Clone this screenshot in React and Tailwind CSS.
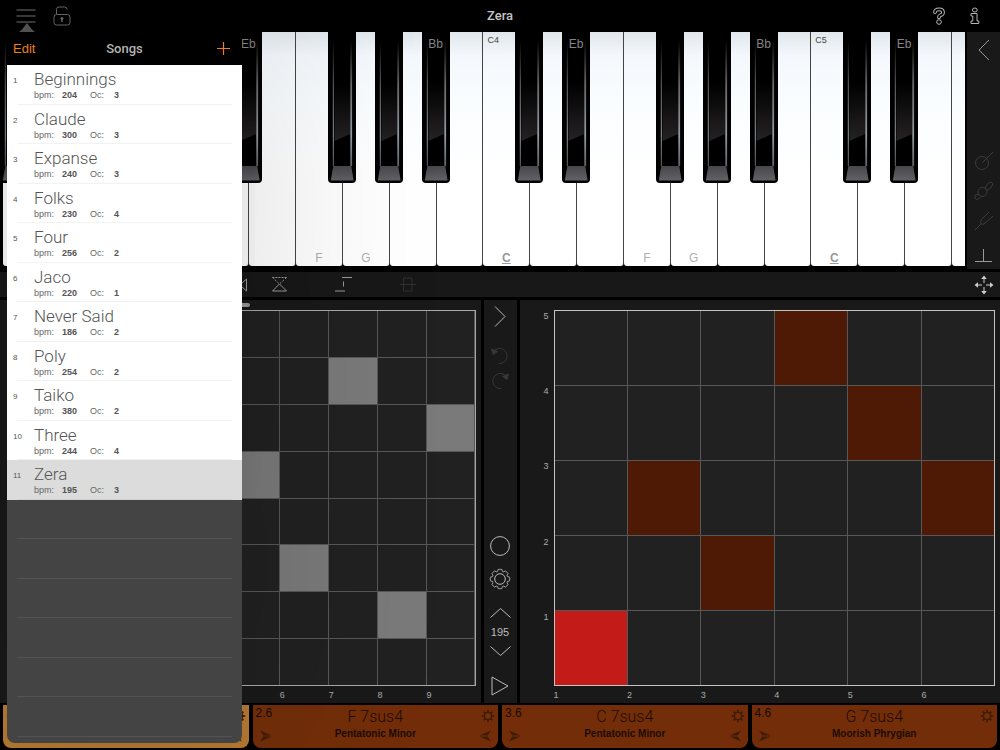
import React, { useState } from "react";
import clsx from "clsx";

const SONGS = [
  { name: "Beginnings", bpm: 204, oc: 3 },
  { name: "Claude", bpm: 300, oc: 3 },
  { name: "Expanse", bpm: 240, oc: 3 },
  { name: "Folks", bpm: 230, oc: 4 },
  { name: "Four", bpm: 256, oc: 2 },
  { name: "Jaco", bpm: 220, oc: 1 },
  { name: "Never Said", bpm: 186, oc: 2 },
  { name: "Poly", bpm: 254, oc: 2 },
  { name: "Taiko", bpm: 380, oc: 2 },
  { name: "Three", bpm: 244, oc: 4 },
  { name: "Zera", bpm: 195, oc: 3 },
];

const EMPTY_ROWS = 6;

const PADS = [
  { id: "1.6", chord: "Bb 7sus4", scale: "Pentatonic Minor", active: true },
  { id: "2.6", chord: "F 7sus4", scale: "Pentatonic Minor" },
  { id: "3.6", chord: "C 7sus4", scale: "Pentatonic Minor" },
  { id: "4.6", chord: "G 7sus4", scale: "Moorish Phrygian", last: true },
];

// "column-row", rows are counted from the top
const NOTE_CELLS = ["7-2", "9-3", "5-4", "6-6", "8-7"];
const SCALE_CELLS = ["4-1", "5-2", "2-3", "6-3", "3-4"];

const NOTES = ["C", "D", "E", "F", "G", "A", "B"];
const HAS_SHARP = ["C", "D", "F", "G", "A"];
const SCALE_NOTES = ["C", "F", "G"];

// 8 lobes around the gear wheel
const gearPath = () => {
  const points = [];
  for (let i = 0; i < 160; i++) {
    const a = (i / 160) * Math.PI * 2;
    const r = 8.8 + 0.9 * Math.tanh(1.5 + 4 * Math.cos(8 * a));
    points.push(`${(11 + r * Math.sin(a)).toFixed(2)} ${(11 - r * Math.cos(a)).toFixed(2)}`);
  }
  return `M${points.join("L")}Z`;
};

const GEAR = gearPath();

// --- Icons ---
const Icon = ({ w, h, className, children }) => (
  <svg
    width={w}
    height={h}
    viewBox={`0 0 ${w} ${h}`}
    fill="none"
    stroke="currentColor"
    className={clsx("block shrink-0", className)}
    aria-hidden="true"
  >
    {children}
  </svg>
);

const MenuIcon = () => (
  <Icon w={20} h={14}>
    <path d="M0.500 1h19M0.500 7h19M0.500 13h19" strokeWidth="1.200" />
  </Icon>
);

const LockIcon = () => (
  <Icon w={18} h={20}>
    <rect x="1" y="8.500" width="16" height="10.500" rx="2.500" />
    <path d="M3.500 8.500V3.500Q3.500 1 6 1h5.500Q14 1 14.300 3.500" />
    <circle cx="9" cy="12.500" r="1" fill="currentColor" />
    <path d="M9 12v4" strokeWidth="1.400" />
  </Icon>
);

const HelpIcon = () => (
  <Icon w={14} h={18}>
    <g strokeLinecap="round" strokeLinejoin="round">
      <path d="M3 5.200Q3.200 2.300 7 2.300 11 2.300 11 5.400 11 7.400 8.500 8.200 7 8.800 7 10.200" strokeWidth="3.800" />
      <path d="M3 5.200Q3.200 2.300 7 2.300 11 2.300 11 5.400 11 7.400 8.500 8.200 7 8.800 7 10.200" stroke="#000" strokeWidth="1.800" />
    </g>
    <circle cx="7" cy="15" r="2.300" fill="#000" />
  </Icon>
);

const InfoIcon = () => (
  <Icon w={10} h={18}>
    <path d="M1 6.500h6v7.500h1.800v2.500H1V14h1.800V9H1z" strokeLinejoin="round" />
    <ellipse cx="4.800" cy="3" rx="2.400" ry="2" />
  </Icon>
);

const SendIcon = ({ flip }) => (
  <svg width="11" height="12" viewBox="0 0 11 12" className={clsx("block text-[#3f1c08]", flip && "-scale-x-100")} aria-hidden="true">
    <path d="M0 0.500 11 5.200H3.200zM0 11.500 11 6.800H3.200z" fill="currentColor" />
    <path d="M3 6h8" stroke="currentColor" strokeWidth="0.600" />
  </svg>
);

const PadGearIcon = () => (
  <Icon w={14} h={14} className="text-[#3f1c08]">
    <circle cx="7" cy="7" r="3.600" strokeWidth="1.400" />
    {[0, 45, 90, 135, 180, 225, 270, 315].map((deg) => (
      <path key={deg} d="M7 0.800V3.400" strokeWidth="1.800" transform={`rotate(${deg} 7 7)`} />
    ))}
  </Icon>
);

// --- Piano ---
const PianoDefs = () => (
  <svg width="0" height="0" className="absolute" aria-hidden="true">
    <defs>
      <linearGradient id="edge" x1="0" y1="0" x2="0" y2="1">
        <stop offset="0" stopColor="#000" />
        <stop offset="0.350" stopColor="#6a6668" />
        <stop offset="0.750" stopColor="#939ca3" />
        <stop offset="1" stopColor="#606468" />
      </linearGradient>
      <linearGradient id="face" x1="0" y1="0" x2="0" y2="1">
        <stop offset="0.450" stopColor="#000" />
        <stop offset="1" stopColor="#252223" />
      </linearGradient>
      <linearGradient id="lip" x1="0" y1="0" x2="0" y2="1">
        <stop offset="0" stopColor="#47464a" />
        <stop offset="1" stopColor="#636165" />
      </linearGradient>
    </defs>
  </svg>
);

const BlackKey = ({ label }) => (
  <button
    type="button"
    aria-label={label || "Black key"}
    className="absolute top-0 -right-[13px] z-10 h-[151px] w-7 overflow-hidden rounded-b-sm bg-black"
  >
    <svg viewBox="0 0 28 151" className="block h-full w-full" aria-hidden="true">
      <rect x="4.800" y="8" width="1" height="126" fill="url(#edge)" />
      <rect x="22.300" y="8" width="1.800" height="126" fill="url(#edge)" />
      <path d="M6.500 2H22V102L6.500 109z" fill="url(#face)" />
      <path d="M5.300 134H23.300L25.600 148.500H2.800z" fill="url(#lip)" />
    </svg>
    {label && (
      <span className="absolute inset-x-0 top-1 text-center text-xs leading-4 text-[#858585]">{label}</span>
    )}
  </button>
);

const PianoKey = ({ index, className }) => {
  const note = NOTES[(index + 3) % 7];
  const octave = 2 + Math.floor((index + 3) / 7);
  // the lowest keys stay unlabelled
  const labelled = index > 4;
  const sharp = labelled ? { D: "Eb", A: "Bb" }[note] : null;

  return (
    <div className={clsx("relative", className)}>
      <button
        type="button"
        aria-label={note + octave}
        className="relative block h-full w-full rounded-b-[3px] border-r border-[#444] bg-[linear-gradient(#e0e6eb,#f4f8fc_10%,#fafdff_30%,#fff_60%)]"
      >
        {labelled && note === "C" && (
          <span className="absolute top-0.5 left-1 text-[9px] leading-3 text-[#444]">C{octave}</span>
        )}
        {labelled && SCALE_NOTES.includes(note) && (
          <span
            className={clsx(
              "absolute inset-x-0 bottom-0 text-center text-xs leading-4",
              note === "C" ? "font-bold text-[#999] underline" : "text-[#b0b0b0]"
            )}
          >
            {note}
          </span>
        )}
      </button>
      {HAS_SHARP.includes(note) && <BlackKey label={sharp} />}
    </div>
  );
};

const Piano = () => (
  <div className="flex h-full min-w-0 flex-1 overflow-hidden pl-[3px] pr-[2px]">
    <PianoKey index={0} className="w-3 shrink-0" />
    {Array.from({ length: 20 }, (_, i) => (
      <PianoKey key={i} index={i + 1} className="flex-1" />
    ))}
    <div className="w-[13px] shrink-0 rounded-bl-[3px] bg-[linear-gradient(#e0e6eb,#f4f8fc_10%,#fafdff_30%,#fff_60%)]" />
  </div>
);

// --- Grids ---
const Grid = ({ cols, rows, isOn, onToggle, onColor, className, colsClass, rowsClass, labelClass }) => (
  <div className="flex h-full">
    <div className={clsx("grid h-full pb-[17px] pr-[5px] text-right text-[9px] leading-3 text-[#aaa]", rowsClass, labelClass)}>
      {Array.from({ length: rows }, (_, i) => (
        <span key={i}>{rows - i}</span>
      ))}
    </div>
    <div className="flex min-w-0 flex-1 flex-col">
      <div className={clsx("grid flex-1 gap-px border bg-[#575757]", colsClass, rowsClass, className)}>
        {Array.from({ length: rows * cols }, (_, i) => {
          const id = `${(i % cols) + 1}-${Math.floor(i / cols) + 1}`;
          return (
            <button
              key={id}
              type="button"
              aria-label={`Cell ${id}`}
              aria-pressed={isOn(id)}
              onClick={() => onToggle(id)}
              className={isOn(id) ? onColor(id) : "bg-[#212121]"}
            />
          );
        })}
      </div>
      <div className={clsx("grid h-[17px] pt-[3px] text-[9px] leading-3 text-[#aaa]", colsClass)}>
        {Array.from({ length: cols }, (_, i) => (
          <span key={i}>{i + 1}</span>
        ))}
      </div>
    </div>
  </div>
);

// --- Song list ---
const SongsPopover = ({ selected, onSelect }) => (
  <section className="absolute top-8 bottom-[7px] left-[7px] z-30 flex w-[235px] flex-col overflow-hidden rounded-b-lg bg-[#444] shadow-[0_0_200px_rgba(0,0,0,0.2)]">
    <header className="grid h-[33px] shrink-0 grid-cols-3 items-center bg-black px-1.5 text-[13px] leading-4">
      <button type="button" className="text-left text-[#ef7d1c]">Edit</button>
      <h2 className="text-center font-['Roboto',sans-serif] font-medium text-[#b4b4b4]">Songs</h2>
      <button type="button" aria-label="Add song" className="mr-1.5 justify-self-end text-[#ef7d1c]">
        <Icon w={13} h={13}>
          <path d="M6.500 0v13M0 6.500h13" strokeWidth="1.200" />
        </Icon>
      </button>
    </header>
    <ul className="grid flex-1 auto-rows-fr pb-1.5">
      {SONGS.map((song, i) => (
        <li key={song.name} className="min-h-0">
          <button
            type="button"
            onClick={() => onSelect(song.name)}
            className={clsx(
              "relative flex h-full w-full pt-1 pl-1.5 text-left",
              selected === song.name ? "bg-[#dcdcdc]" : "bg-white"
            )}
          >
            <span className="w-[21px] pt-1.5 text-[8px] leading-3 text-[#555]">{i + 1}</span>
            <span className="block">
              <span className="block font-['Roboto',sans-serif] text-[17px] leading-5 font-light text-[#555]">{song.name}</span>
              <span className="flex text-[9px] leading-3 text-[#666]">
                <span className="w-7">bpm:</span>
                <b className="w-7 text-[#555]">{song.bpm}</b>
                <span className="w-6">Oc:</span>
                <b className="text-[#555]">{song.oc}</b>
              </span>
            </span>
            <span className="absolute right-2.5 bottom-0 left-2.5 h-px bg-black/5" />
          </button>
        </li>
      ))}
      {Array.from({ length: EMPTY_ROWS }, (_, i) => (
        <li key={i} className="mx-2.5 border-b border-[#535353]" />
      ))}
    </ul>
  </section>
);

const Pad = ({ pad }) => (
  <article
    className={clsx(
      "flex min-w-0 flex-1 justify-between rounded-b-lg px-[3px]",
      pad.active ? "bg-[#b67b32]" : "bg-[#732e09]"
    )}
  >
    <div className="flex w-10 flex-col justify-between pb-1.5">
      <span className="text-xs leading-4 text-[#170a02]">{pad.id}</span>
      <button type="button" aria-label="Send forward" className="ml-1 w-3">
        <SendIcon />
      </button>
    </div>
    <button type="button" className="flex flex-col items-center pt-px text-[#1c0b02]">
      <span className="font-['Roboto',sans-serif] text-base leading-[22px] font-light">{pad.chord}</span>
      <span className="text-[10px] leading-3 font-bold">{pad.scale}</span>
    </button>
    <div className="flex w-10 flex-col items-end justify-between pt-1 pb-1.5">
      <button type="button" aria-label="Pad settings">
        <PadGearIcon />
      </button>
      {!pad.last && (
        <button type="button" aria-label="Send back" className="mr-1">
          <SendIcon flip />
        </button>
      )}
    </div>
  </article>
);

function App() {
  const [song, setSong] = useState("Zera");
  const [noteCells, setNoteCells] = useState(NOTE_CELLS);
  const [scaleCells, setScaleCells] = useState([...SCALE_CELLS, "1-5"]);
  const tempo = SONGS.find((s) => s.name === song).bpm;

  const toggle = (setter) => (id) =>
    setter((cells) => (cells.includes(id) ? cells.filter((c) => c !== id) : [...cells, id]));

  return (
    <div className="relative flex h-screen flex-col overflow-hidden bg-black font-['Liberation_Sans',Arial,sans-serif] text-[#aaa]">
      <PianoDefs />

      {/* Top bar */}
      <header className="grid h-8 shrink-0 grid-cols-3 items-center px-4">
        <div className="flex items-center gap-[17px] text-[#6b6b6b]">
          <button type="button" aria-label="Menu" className="text-[#777]"><MenuIcon /></button>
          <button type="button" aria-label="Lock"><LockIcon /></button>
        </div>
        <h1 className="text-center font-['Roboto',sans-serif] text-[13px] leading-4 font-medium text-[#c4c4c4]">{song}</h1>
        <div className="flex items-center justify-end gap-6 pr-1 text-[#b5b5b5]">
          <button type="button" aria-label="Help"><HelpIcon /></button>
          <button type="button" aria-label="Info"><InfoIcon /></button>
        </div>
      </header>

      {/* Piano and side bar */}
      <div className="flex h-[237px] shrink-0">
        <div className="flex min-w-0 flex-1 pb-[3px]">
          <Piano />
        </div>
        <aside className="flex w-[33px] flex-col items-center bg-[#191919] pt-[7px] pb-[7px] text-[#3c3c3c]">
          <button type="button" aria-label="Collapse" className="mb-auto text-[#999]">
            <Icon w={12} h={22}><path d="M11 1 1 11 11 21" /></Icon>
          </button>
          <div className="flex flex-col gap-2.5">
            <button type="button" aria-label="Whole note">
              <Icon w={20} h={20}><circle cx="8" cy="12" r="6.500" /><path d="M8 12 19 1" /></Icon>
            </button>
            <button type="button" aria-label="Link">
              <Icon w={20} h={20}>
                <circle cx="8.500" cy="11" r="4.500" />
                <path d="M11 8Q12 3 15.500 1.500 19 0.500 18.500 4 17 8 12 9.500" />
                <path d="M5 14Q0 12 1 17 3 20.500 7 15.500" />
              </Icon>
            </button>
            <button type="button" aria-label="Tuning fork">
              <Icon w={20} h={20}><path d="M15 1 7 9Q6 12 7.500 13 9 14 11 12L19 5M7 13 1 19" /></Icon>
            </button>
          </div>
          <button type="button" aria-label="Dock" className="mt-[18px] text-[#999]">
            <Icon w={17} h={13}><path d="M8.500 0v12M0 12.500h17" /></Icon>
          </button>
        </aside>
      </div>

      {/* Tool bar */}
      <div className="mt-[3px] flex h-[25px] shrink-0 items-center bg-[#181818] pr-1.5 text-[#999]">
        <div className="flex flex-1 items-center">
          <button type="button" aria-label="Flip horizontally" className="ml-[232px] w-4">
            <Icon w={15} h={14}><path d="M14.500 1v12L8 7zM0.500 1v12L7 7z" /></Icon>
          </button>
          <button type="button" aria-label="Flip vertically" className="ml-6">
            <Icon w={15} h={15}>
              <path d="M0.500 14h14L7.500 7z" />
              <path d="M0.500 0.500h14" strokeDasharray="2 1" />
              <path d="M14.500 0.500 7.500 7 0.500 0.500" strokeDasharray="2 1.500" />
            </Icon>
          </button>
          <button type="button" aria-label="Align" className="ml-12">
            <Icon w={17} h={15}><path d="M7 0.500h10M0 14h10M8.500 4.500v5" /></Icon>
          </button>
          <button type="button" aria-label="Split" className="ml-12 text-[#303030]">
            <Icon w={16} h={15}><path d="M3.500 1h8.500v13H3.500zM0 7.500h16" /></Icon>
          </button>
        </div>
        <button type="button" aria-label="Move">
          <Icon w={20} h={20} className="text-[#ccc]">
            <path d="M10 3v5M10 12v5M3 10h5M12 10h5" />
            <path
              d="M10 0.500 7.200 4h5.600zM10 19.500 7.200 16h5.600zM0.500 10 4 7.200v5.600zM19.500 10 16 7.200v5.600z"
              fill="currentColor"
              stroke="none"
            />
          </Icon>
        </button>
      </div>

      {/* Grids */}
      <main className="mt-[3px] flex min-h-0 flex-1 gap-[3px]">
        <section className="relative flex-1 bg-[#191919] pt-2.5 pr-[5px]">
          <Grid
            cols={9}
            rows={8}
            colsClass="grid-cols-9"
            rowsClass="grid-rows-8"
            labelClass="w-[35px]"
            className="border-[#a8a8a8]"
            isOn={(id) => noteCells.includes(id)}
            onToggle={toggle(setNoteCells)}
            onColor={() => "bg-[#7a7a7a]"}
          />
          <span className="absolute top-[3px] left-[35px] h-1 w-[215px] rounded-full bg-[#999]" />
        </section>

        <nav className="flex w-[33px] shrink-0 flex-col items-center bg-[#191919] pt-1.5 pb-[7px] text-[#bbb]">
          <button type="button" aria-label="Expand">
            <Icon w={12} h={21}><path d="M1 0.500 11 10.500 1 20.500" /></Icon>
          </button>
          <button type="button" aria-label="Undo" className="mt-5 text-[#383838]">
            <Icon w={18} h={18}><path d="M3 4A7.500 7.500 0 1 1 8 16.500" /><path d="M0.500 2 2 7.500 6.500 4.500z" fill="currentColor" /></Icon>
          </button>
          <button type="button" aria-label="Redo" className="mt-[7px] text-[#383838]">
            <Icon w={18} h={18}><path d="M15 4A7.500 7.500 0 1 0 10 16.500" /><path d="M17.500 2 16 7.500 11.500 4.500z" fill="currentColor" /></Icon>
          </button>
          <button type="button" aria-label="Record" className="mt-auto">
            <Icon w={20} h={20}><circle cx="10" cy="10" r="9.400" /></Icon>
          </button>
          <button type="button" aria-label="Settings" className="mt-3">
            <Icon w={22} h={22}><path d={GEAR} strokeLinejoin="round" /><circle cx="11" cy="11" r="5.300" /></Icon>
          </button>
          <button type="button" aria-label="Tempo up" className="mt-[18px]">
            <Icon w={21} h={10}><path d="M0.500 9.500 10.500 0.500 20.500 9.500" /></Icon>
          </button>
          <span className="my-[7px] text-[11px] leading-[14px]">{tempo}</span>
          <button type="button" aria-label="Tempo down">
            <Icon w={21} h={10}><path d="M0.500 0.500 10.500 9.500 20.500 0.500" /></Icon>
          </button>
          <button type="button" aria-label="Play" className="mt-5">
            <Icon w={18} h={20}><path d="M1 1 17 10 1 19z" /></Icon>
          </button>
        </nav>

        <section className="flex-1 bg-[#191919] pt-2.5 pr-[5px]">
          <Grid
            cols={6}
            rows={5}
            colsClass="grid-cols-6"
            rowsClass="grid-rows-5"
            labelClass="w-[34px]"
            className="border-[#c4c4c4]"
            isOn={(id) => scaleCells.includes(id)}
            onToggle={toggle(setScaleCells)}
            onColor={(id) => (id === "1-5" ? "bg-[#c21b18]" : "bg-[#4e1a05]")}
          />
        </section>
      </main>

      {/* Chord pads */}
      <footer className="flex h-[47px] shrink-0 gap-1 px-[3px] pt-0.5 pb-0.5">
        {PADS.map((pad) => (
          <Pad key={pad.id} pad={pad} />
        ))}
      </footer>

      <svg width="18" height="10" viewBox="0 0 18 10" className="absolute top-[23px] left-[18px] z-30" aria-hidden="true">
        <path d="M0 10Q5 6 9 0 13 6 18 10z" fill="#555" />
      </svg>
      <SongsPopover selected={song} onSelect={setSong} />
    </div>
  );
}

export default App;
